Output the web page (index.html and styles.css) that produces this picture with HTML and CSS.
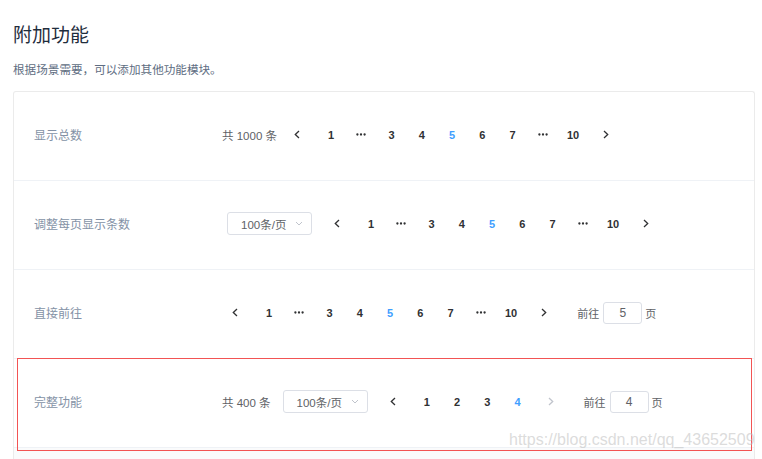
FILE: index.html
```html
<!DOCTYPE html>
<html lang="zh-CN">
<head>
<meta charset="utf-8">
<title>附加功能</title>
<link rel="stylesheet" href="styles.css">
</head>
<body>
<div class="page">
  <h2 class="title">附加功能</h2>
  <p class="desc">根据场景需要，可以添加其他功能模块。</p>
  <div class="card">
    <div class="row">
      <span class="label">显示总数</span>
      <div class="pagination">
        <span class="total">共 1000 条</span>
        <button class="btn prev"><svg width="6" height="9" viewBox="0 0 6 9"><polyline points="5,1 1.3,4.5 5,8"/></svg></button>
        <ul class="pager">
          <li>1</li>
          <li class="more"><svg width="10" height="3" viewBox="0 0 10 3"><circle cx="1.4" cy="1.5" r="1.15"/><circle cx="5" cy="1.5" r="1.15"/><circle cx="8.6" cy="1.5" r="1.15"/></svg></li>
          <li>3</li><li>4</li><li class="active">5</li><li>6</li><li>7</li>
          <li class="more"><svg width="10" height="3" viewBox="0 0 10 3"><circle cx="1.4" cy="1.5" r="1.15"/><circle cx="5" cy="1.5" r="1.15"/><circle cx="8.6" cy="1.5" r="1.15"/></svg></li>
          <li>10</li>
        </ul>
        <button class="btn next"><svg width="6" height="9" viewBox="0 0 6 9"><polyline points="1,1 4.7,4.5 1,8"/></svg></button>
      </div>
    </div>
    <div class="row">
      <span class="label">调整每页显示条数</span>
      <div class="pagination">
        <span class="sizes"><span class="select">100条/页<svg class="caret" width="8" height="5" viewBox="0 0 8 5"><polyline points="1,1 4,4 7,1"/></svg></span></span>
        <button class="btn prev"><svg width="6" height="9" viewBox="0 0 6 9"><polyline points="5,1 1.3,4.5 5,8"/></svg></button>
        <ul class="pager">
          <li>1</li>
          <li class="more"><svg width="10" height="3" viewBox="0 0 10 3"><circle cx="1.4" cy="1.5" r="1.15"/><circle cx="5" cy="1.5" r="1.15"/><circle cx="8.6" cy="1.5" r="1.15"/></svg></li>
          <li>3</li><li>4</li><li class="active">5</li><li>6</li><li>7</li>
          <li class="more"><svg width="10" height="3" viewBox="0 0 10 3"><circle cx="1.4" cy="1.5" r="1.15"/><circle cx="5" cy="1.5" r="1.15"/><circle cx="8.6" cy="1.5" r="1.15"/></svg></li>
          <li>10</li>
        </ul>
        <button class="btn next"><svg width="6" height="9" viewBox="0 0 6 9"><polyline points="1,1 4.7,4.5 1,8"/></svg></button>
      </div>
    </div>
    <div class="row">
      <span class="label">直接前往</span>
      <div class="pagination">
        <button class="btn prev"><svg width="6" height="9" viewBox="0 0 6 9"><polyline points="5,1 1.3,4.5 5,8"/></svg></button>
        <ul class="pager">
          <li>1</li>
          <li class="more"><svg width="10" height="3" viewBox="0 0 10 3"><circle cx="1.4" cy="1.5" r="1.15"/><circle cx="5" cy="1.5" r="1.15"/><circle cx="8.6" cy="1.5" r="1.15"/></svg></li>
          <li>3</li><li>4</li><li class="active">5</li><li>6</li><li>7</li>
          <li class="more"><svg width="10" height="3" viewBox="0 0 10 3"><circle cx="1.4" cy="1.5" r="1.15"/><circle cx="5" cy="1.5" r="1.15"/><circle cx="8.6" cy="1.5" r="1.15"/></svg></li>
          <li>10</li>
        </ul>
        <button class="btn next"><svg width="6" height="9" viewBox="0 0 6 9"><polyline points="1,1 4.7,4.5 1,8"/></svg></button>
        <span class="jump">前往<span class="jump-input">5</span>页</span>
      </div>
    </div>
    <div class="row">
      <span class="label">完整功能</span>
      <div class="pagination">
        <span class="total">共 400 条</span>
        <span class="sizes"><span class="select">100条/页<svg class="caret" width="8" height="5" viewBox="0 0 8 5"><polyline points="1,1 4,4 7,1"/></svg></span></span>
        <button class="btn prev"><svg width="6" height="9" viewBox="0 0 6 9"><polyline points="5,1 1.3,4.5 5,8"/></svg></button>
        <ul class="pager">
          <li>1</li><li>2</li><li>3</li><li class="active">4</li>
        </ul>
        <button class="btn next disabled"><svg width="6" height="9" viewBox="0 0 6 9"><polyline points="1,1 4.7,4.5 1,8"/></svg></button>
        <span class="jump jump-last">前往<span class="jump-input">4</span>页</span>
      </div>
    </div>
    <div class="card-foot"></div>
  </div>
  <div class="highlight"></div>
  <div class="watermark">https://blog.csdn.net/qq_43652509</div>
</div>
</body>
</html>
```

FILE: styles.css
```css
html, body {
  margin: 0;
  padding: 0;
  background: #ffffff;
}

body {
  font-family: "Liberation Sans", "Noto Sans CJK SC", sans-serif;
  color: #606266;
  overflow: hidden;
}

.page {
  position: relative;
  padding: 21px 7px 0 13px;
  height: 459px;
  box-sizing: border-box;
}

.title {
  margin: 0;
  font-size: 19px;
  line-height: 25px;
  font-weight: normal;
  color: #1f2d3d;
  font-family: "Noto Sans CJK SC", sans-serif;
}

.desc {
  margin: 14px 0 13px;
  font-size: 11.6px;
  line-height: 18px;
  color: #5e6d82;
  font-family: "Noto Sans CJK SC", sans-serif;
}

.card {
  border: 1px solid #ebebeb;
  border-radius: 3px;
  border-bottom: none;
}

.row {
  display: flex;
  align-items: center;
  height: 89px;
  box-sizing: border-box;
  padding: 0 0 3px 20px;
  border-bottom: 1px solid #eff2f6;
}

.label {
  width: 188px;
  flex: none;
  font-size: 12px;
  color: #8492a6;
  font-family: "Noto Sans CJK SC", sans-serif;
}

.pagination {
  display: flex;
  align-items: center;
  font-size: 11.5px;
  color: #303133;
}

.total {
  margin-right: 7px;
  color: #606266;
  white-space: nowrap;
}

.sizes {
  margin-left: 5px;
  margin-right: 12px;
}

.select {
  display: flex;
  align-items: center;
  justify-content: space-between;
  width: 85px;
  height: 23px;
  box-sizing: border-box;
  padding: 0 8px 0 13px;
  border: 1px solid #dcdfe6;
  border-radius: 3px;
  font-size: 11.5px;
  color: #606266;
  background: #fff;
}

.caret polyline {
  fill: none;
  stroke: #c0c4cc;
  stroke-width: 1;
}

.btn {
  display: flex;
  align-items: center;
  justify-content: center;
  width: 26px;
  height: 24px;
  padding: 0;
  border: none;
  background: transparent;
}

.btn polyline {
  fill: none;
  stroke: #303133;
  stroke-width: 1.3;
}

.btn.disabled polyline {
  stroke: #c0c4cc;
}

.prev {
  margin-right: 6px;
}

.next {
  margin-left: 5px;
}

.pager {
  display: flex;
  margin: 0;
  padding: 0;
  list-style: none;
}

.pager li {
  display: flex;
  align-items: center;
  justify-content: center;
  width: 30.25px;
  height: 24px;
  font-size: 11px;
  font-weight: bold;
  color: #303133;
}

.pager li.active {
  color: #409eff;
}

.pager li.more circle {
  fill: #303133;
}

.jump {
  display: flex;
  align-items: center;
  margin-left: 20px;
  font-size: 11px;
  color: #606266;
  font-family: "Noto Sans CJK SC", sans-serif;
}

.jump-input {
  display: flex;
  align-items: center;
  justify-content: center;
  width: 39px;
  height: 22px;
  box-sizing: border-box;
  margin: 0 3px 0 4px;
  border: 1px solid #dcdfe6;
  border-radius: 3px;
  font-family: "Liberation Sans", sans-serif;
  font-size: 12px;
}

.card-foot {
  height: 20px;
  background: #fafbfc;
}

.highlight {
  position: absolute;
  left: 17px;
  top: 358px;
  width: 735px;
  height: 93px;
  box-sizing: border-box;
  border: 1.5px solid #f25454;
  pointer-events: none;
}

.watermark {
  position: absolute;
  left: 509px;
  top: 430px;
  font-size: 16px;
  line-height: 20px;
  color: rgba(190, 190, 190, 0.55);
  white-space: nowrap;
  pointer-events: none;
}
```
